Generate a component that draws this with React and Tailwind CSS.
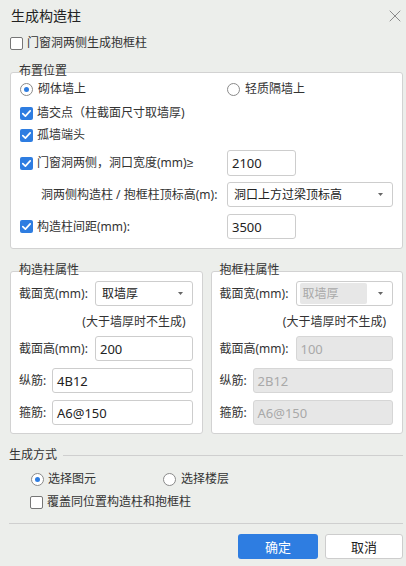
import { X } from 'lucide-react';

function Check({ checked }) {
  return checked ? (
    <span className="w-[13px] h-[13px] rounded-[2px] bg-[#2e7de1] flex items-center justify-center shrink-0">
      <svg width="13" height="13" viewBox="0 0 13 13">
        <polyline points="2.8,6.6 5.4,9.1 10.2,3.9" fill="none" stroke="#fff" strokeWidth="1.7" strokeLinecap="round" strokeLinejoin="round" />
      </svg>
    </span>
  ) : (
    <span className="w-[13px] h-[13px] rounded-[2px] bg-white border border-[#767676] shrink-0" />
  );
}

function Radio({ checked }) {
  return (
    <span className="w-[13px] h-[13px] rounded-full bg-white border border-[#8a8a8a] flex items-center justify-center shrink-0">
      {checked && <span className="w-[5px] h-[5px] rounded-full bg-[#2e7de1]" />}
    </span>
  );
}

function Field({ value, className = '', disabled = false }) {
  return (
    <div
      className={`h-[25px] rounded-[3px] border flex items-center pl-[4px] text-[13px] ${
        disabled ? 'bg-[#e7e7e7] border-[#d6d6d6] text-[#a9a9a9]' : 'bg-white border-[#cdcdcd] text-[#222]'
      } ${className}`}
    >
      {value}
    </div>
  );
}

function Arrow() {
  return (
    <svg width="5" height="3" viewBox="0 0 5 3" className="shrink-0">
      <polygon points="0,0 5,0 2.5,3" fill="#666" />
    </svg>
  );
}

function Select({ value, className = '', disabled = false }) {
  return (
    <div className={`h-[25px] rounded-[3px] border border-[#cdcdcd] bg-white flex items-center pr-[9px] ${className}`}>
      {disabled ? (
        <div className="flex-1 ml-[3px] mr-[11px] h-[21px] rounded-[2px] bg-[#e7e7e7] text-[#a9a9a9] flex items-center pl-[3px]">{value}</div>
      ) : (
        <div className="flex-1 pl-[6px] text-[#222]">{value}</div>
      )}
      <Arrow />
    </div>
  );
}

function PropGroup({ title, disabled, width, height, rebar, stirrup }) {
  return (
    <div className="relative flex-1 border border-[#d2d2d2] rounded-[3px] bg-white pl-[8px] pr-[9px] pt-[9px] pb-[8px]">
      <span className="absolute -top-[10px] left-[8px] leading-[16px] text-[#333]">{title}</span>
      <div className="flex items-center h-[25px]">
        <span className="w-[76px] shrink-0">截面宽(mm):</span>
        <Select value={width} disabled={disabled} className="flex-1" />
      </div>
      <div className="mt-[6px] h-[20px] flex items-center justify-end pr-[7px]">(大于墙厚时不生成)</div>
      <div className="mt-[4px] flex items-center h-[25px]">
        <span className="w-[76px] shrink-0">截面高(mm):</span>
        <Field value={height} disabled={disabled} className="flex-1" />
      </div>
      <div className="mt-[7px] flex items-center h-[25px]">
        <span className="w-[33px] shrink-0">纵筋:</span>
        <Field value={rebar} disabled={disabled} className="flex-1" />
      </div>
      <div className="mt-[7px] flex items-center h-[25px]">
        <span className="w-[33px] shrink-0">箍筋:</span>
        <Field value={stirrup} disabled={disabled} className="flex-1" />
      </div>
    </div>
  );
}

export default function App() {
  return (
    <div className="w-[406px] h-[566px] bg-[#eceeeb] text-[12px] leading-[16px] text-[#333] font-['Noto_Sans','Noto_Sans_CJK_SC',sans-serif] flex flex-col">
      <div className="h-[32px] flex items-center justify-between pl-[11px] pr-[1px]">
        <span className="text-[14px] text-[#222]">生成构造柱</span>
        <X size={20} strokeWidth={1} className="text-[#777]" />
      </div>

      <div className="h-[22px] flex items-center gap-[4px] pl-[10px]">
        <Check checked={false} />
        <span>门窗洞两侧生成抱框柱</span>
      </div>

      <div className="relative mt-[18px] ml-[10px] w-[393px] border border-[#d2d2d2] rounded-[3px] bg-white pl-[9px] pt-[5px] pb-[9px]">
        <span className="absolute -top-[10px] left-[8px]">布置位置</span>
        <div className="h-[22px] flex items-center">
          <div className="w-[207px] flex items-center gap-[5px]">
            <Radio checked />
            <span>砌体墙上</span>
          </div>
          <div className="flex items-center gap-[5px]">
            <Radio checked={false} />
            <span>轻质隔墙上</span>
          </div>
        </div>
        <div className="mt-[2px] h-[22px] flex items-center gap-[4px]">
          <Check checked />
          <span>墙交点（柱截面尺寸取墙厚)</span>
        </div>
        <div className="h-[22px] flex items-center gap-[4px]">
          <Check checked />
          <span>孤墙端头</span>
        </div>
        <div className="mt-[4px] h-[26px] flex items-center">
          <div className="w-[207px] flex items-center gap-[4px]">
            <Check checked />
            <span>
              门窗洞两侧，洞口宽度(mm)<span className="font-['Liberation_Sans',sans-serif]">≥</span>
            </span>
          </div>
          <Field value="2100" className="w-[69px] h-[26px]" />
        </div>
        <div className="mt-[6px] h-[25px] flex items-center">
          <div className="w-[207px] pl-[21px]">洞两侧构造柱 / 抱框柱顶标高(m):</div>
          <Select value="洞口上方过梁顶标高" className="w-[166px]" />
        </div>
        <div className="mt-[7px] h-[25px] flex items-center">
          <div className="w-[207px] flex items-center gap-[4px]">
            <Check checked />
            <span>构造柱间距(mm):</span>
          </div>
          <Field value="3500" className="w-[69px]" />
        </div>
      </div>

      <div className="mt-[22px] ml-[10px] w-[393px] flex gap-[8px]">
        <PropGroup title="构造柱属性" width="取墙厚" height="200" rebar="4B12" stirrup="A6@150" />
        <PropGroup title="抱框柱属性" disabled width="取墙厚" height="100" rebar="2B12" stirrup="A6@150" />
      </div>

      <div className="mt-[11px] ml-[9px] w-[394px] h-[20px] flex items-center gap-[6px]">
        <span>生成方式</span>
        <div className="flex-1 h-px bg-[#cfcfcf]" />
      </div>
      <div className="mt-[3px] h-[22px] flex items-center pl-[31px]">
        <div className="w-[132px] flex items-center gap-[4px]">
          <Radio checked />
          <span>选择图元</span>
        </div>
        <div className="flex items-center gap-[5px]">
          <Radio checked={false} />
          <span>选择楼层</span>
        </div>
      </div>
      <div className="mt-[1px] h-[22px] flex items-center gap-[4px] pl-[30px]">
        <Check checked={false} />
        <span>覆盖同位置构造柱和抱框柱</span>
      </div>

      <div className="mt-[10px] ml-[9px] w-[394px] h-px bg-[#cfcfcf]" />

      <div className="mt-[10px] w-[403px] flex justify-end gap-[7px]">
        <button className="w-[80px] h-[25px] rounded-[3px] bg-[#2e7de1] text-white text-[13px]">确定</button>
        <button className="w-[78px] h-[25px] rounded-[3px] bg-white border border-[#cdcdcd] text-[#222] text-[13px]">取消</button>
      </div>
    </div>
  );
}
